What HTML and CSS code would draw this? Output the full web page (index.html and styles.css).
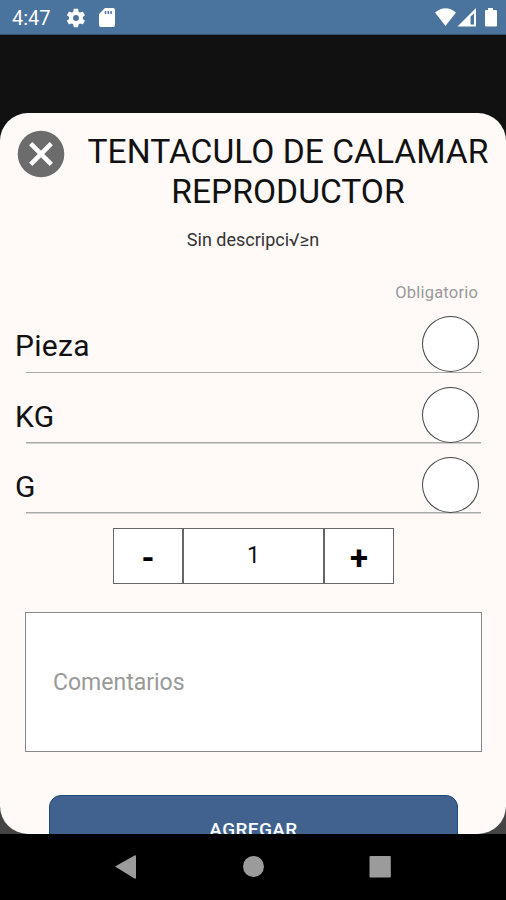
FILE: index.html
```html
<!DOCTYPE html>
<html lang="es">
<head>
  <meta charset="UTF-8">
  <meta name="viewport" content="width=device-width, initial-scale=1.0">
  <title>Agregar producto</title>
  <link rel="stylesheet" href="styles.css">
</head>

<body>
  <header class="status-bar">
    <span class="clock">4:47</span>
    <svg class="gear" width="22" height="22" viewBox="0 0 24 24">
      <path fill="#fff" fill-rule="evenodd" d="M19.4 13a7.800 7.800 0 0 0 0-2l2.100-1.600c.2-.2.200-.4.100-.6l-2-3.500c-.1-.2-.4-.3-.6-.2l-2.500 1a7.300 7.300 0 0 0-1.700-1l-.4-2.600c0-.3-.2-.5-.5-.5h-4c-.3 0-.5.200-.5.500L9 5.100a7.300 7.300 0 0 0-1.700 1l-2.500-1c-.2-.1-.5 0-.6.200l-2 3.500c-.1.200-.1.500.100.600L4.500 11a7.800 7.800 0 0 0 0 2l-2.200 1.600c-.2.200-.2.400-.1.600l2 3.500c.1.200.4.300.6.200l2.500-1c.5.400 1.100.700 1.700 1l.4 2.600c0 .3.200.5.500.5h4c.3 0 .5-.2.500-.5l.4-2.600c.6-.3 1.200-.6 1.700-1l2.500 1c.2.100.5 0 .6-.2l2-3.500c.1-.2.100-.5-.1-.6zM12 15.200a3.200 3.200 0 1 1 0-6.400 3.200 3.200 0 0 1 0 6.400z"/>
    </svg>
    <svg class="sd-card" width="16" height="19" viewBox="0 0 16 19">
      <path fill="#fff" d="M6 0h8q2 0 2 2v15q0 2-2 2H2q-2 0-2-2V6z"/>
      <path stroke="#4a739d" stroke-width="1.500" d="M6.500 3v3M9.300 3v3M12.100 3v3"/>
    </svg>
    <svg class="signals" width="64" height="20" viewBox="0 0 64 20">
      <path fill="#fff" d="M0 4.500Q10.500-4 21 4.500L10.500 18z"/>
      <path fill="#fff" fill-rule="evenodd" d="M22.500 18.500L41 0v18.500zM35.500 8.500v8h3.500v-11z"/>
      <path fill="#fff" d="M53 0h5v2h3q1 0 1 1v14.500q0 1-1 1H51q-1 0-1-1V3q0-1 1-1h2z"/>
    </svg>
  </header>

  <main class="backdrop">
    <section class="modal">
      <div class="modal-head">
        <svg class="close" width="48" height="48" viewBox="0 0 48 48">
          <circle cx="24" cy="24" r="23.300" fill="#6c6c6c"/>
          <path stroke="#fff" stroke-width="4.600" d="M13.700 13.700l20.600 20.600M34.300 13.700L13.700 34.300"/>
        </svg>
        <h1>TENTACULO DE CALAMAR<br>REPRODUCTOR</h1>
      </div>
      <p class="description">Sin descripci√≥n</p>
      <p class="required">Obligatorio</p>

      <ul class="options">
        <li><span>Pieza</span><i class="radio"></i></li>
        <li><span>KG</span><i class="radio"></i></li>
        <li><span>G</span><i class="radio"></i></li>
      </ul>

      <div class="quantity">
        <div class="step">-</div>
        <div class="amount">1</div>
        <div class="step">+</div>
      </div>

      <div class="comments">Comentarios</div>
      <div class="add">AGREGAR</div>
    </section>
  </main>

  <nav class="nav-bar">
    <svg width="506" height="66" viewBox="0 0 506 66" fill="#9b9b9b">
      <path d="M115 32.500L134.500 21.500q1.500-.8 1.500 1v21q0 1.700-1.500 1z"/>
      <circle cx="253.500" cy="32.500" r="10.500"/>
      <rect x="369.500" y="22" width="21.300" height="21.500" rx="1"/>
    </svg>
  </nav>
</body>

</html>
```
FILE: styles.css
```css
* {
  box-sizing: border-box;
}

body {
  margin: 0;
  height: 900px;
  display: flex;
  flex-direction: column;
  overflow: hidden;
  background: #000;
  color: #111;
  font-family: Roboto, sans-serif;
}

h1,
p,
ul {
  margin: 0;
  padding: 0;
  font-weight: 400;
}

.status-bar {
  display: flex;
  align-items: center;
  height: 35px;
  padding: 1px 10px 0 12px;
  background: #4a739d;
  border-bottom: 1px solid #35536f;
}

.clock {
  width: 53px;
  color: #fff;
  font-size: 20px;
}

.sd-card {
  margin-left: 12px;
}

.signals {
  margin-left: auto;
  margin-right: -3px;
}

.backdrop {
  height: 799px;
  padding-top: 78px;
  background: linear-gradient(#111 90%, #444 90%);
}

.modal {
  height: 721px;
  overflow: hidden;
  border-radius: 28px;
  background: #fff9f8;
}

.modal-head {
  display: flex;
  padding: 17px 0 0 17px;
}

.modal-head h1 {
  width: 436px;
  margin: 2px 0 0 5px;
  font-size: 33.6px;
  line-height: 40px;
  text-align: center;
  white-space: nowrap;
}

.description {
  margin-top: 17px;
  font-size: 18px;
  line-height: 22px;
  text-align: center;
  color: #333;
}

.required {
  margin-top: 31px;
  padding-right: 28px;
  font-size: 16.5px;
  line-height: 22px;
  letter-spacing: 0.2px;
  text-align: right;
  color: #999;
}

.options {
  margin-top: -1px;
  padding: 0 25px 0 15px;
  list-style: none;
}

.options li {
  display: flex;
  justify-content: space-between;
  align-items: flex-end;
  height: 70.3px;
  padding: 0 2px 1px 0;
  font-size: 30px;
  line-height: 52px;
  letter-spacing: 0.3px;
  background: linear-gradient(#aaa, #aaa) 11px 100% / 100% 1.5px no-repeat;
}

.radio {
  width: 57px;
  height: 56px;
  border: 1px solid #444;
  border-radius: 50%;
  background: #fff;
}

.quantity {
  display: flex;
  width: 281px;
  height: 56px;
  margin: 14px 0 0 113px;
  font-size: 23px;
  line-height: 54px;
  text-align: center;
}

.quantity div {
  border: 1.5px solid #666;
  background: #fff;
}

.quantity .step {
  width: 70px;
  font-size: 33px;
  font-weight: 700;
  line-height: 57px;
  color: #000;
}

.amount {
  flex: 1;
}

.comments {
  height: 140px;
  margin: 28px 24px 0 25px;
  padding-left: 27px;
  border: 1.5px solid #888;
  background: #fff;
  color: #999;
  font-size: 23px;
  line-height: 140px;
}

.add {
  height: 70px;
  margin: 43px 48px 0 49px;
  border: 1.5px solid #1d4a7b;
  border-radius: 12px;
  background: #41628f;
  color: #fff;
  font-size: 19px;
  font-weight: 500;
  line-height: 68px;
  letter-spacing: 0.4px;
  text-align: center;
}

.nav-bar {
  height: 66px;
}
```
